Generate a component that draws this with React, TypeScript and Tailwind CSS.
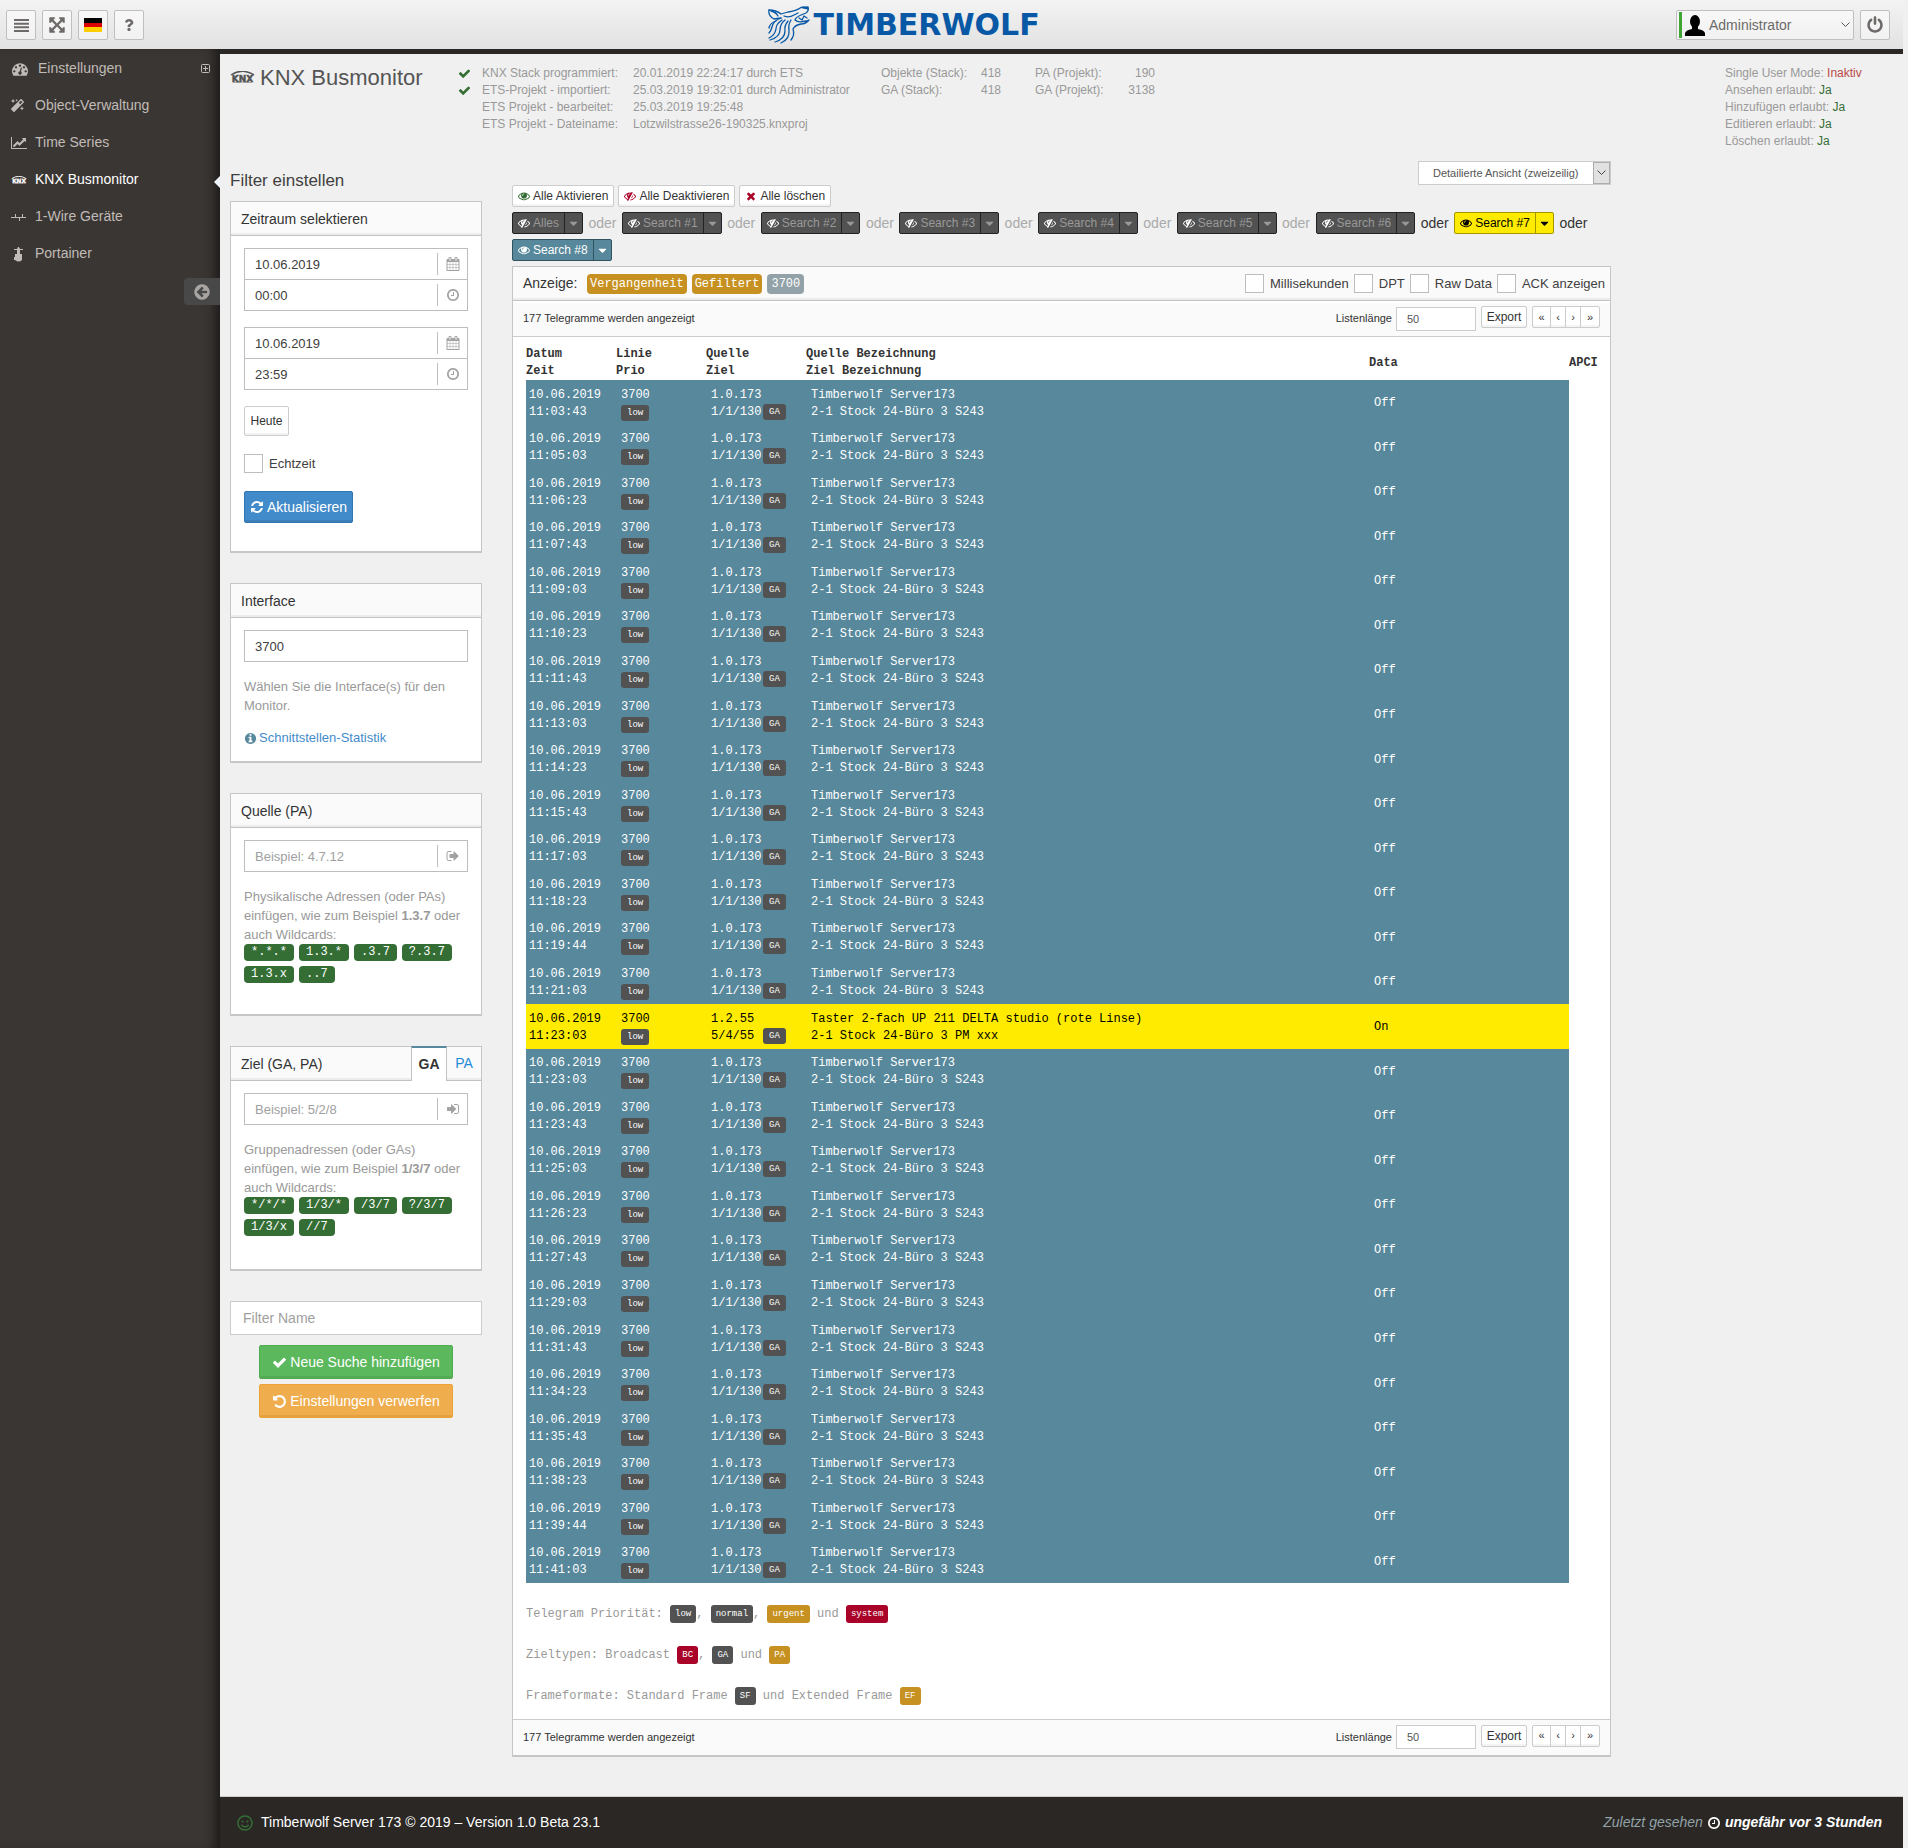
import type { ReactNode } from "react";
import { FaMagic, FaQuestion, FaRegSmile } from "react-icons/fa";

const CIRCLE =
  "M1664 896q0 209-103 385.5t-279.5 279.5-385.5 103-385.5-103-279.5-279.5-103-385.5 103-385.5 279.5-279.5 385.5-103 385.5 103 279.5 279.5 103 385.5z";

const ICONS = {
  eye: "M1664 960q-152-236-381-353 61 104 61 225 0 185-131.5 316.5t-316.5 131.5-316.5-131.5-131.5-316.5q0-121 61-225-229 117-381 353 133 205 333.5 326.5t434.5 121.5 434.5-121.5 333.5-326.5zm-720-384q0-20-14-34t-34-14q-125 0-214.5 89.5t-89.5 214.5q0 20 14 34t34 14 34-14 14-34q0-86 61-147t147-61q20 0 34-14t14-34zm848 384q0 34-20 69-140 230-376.5 368.5t-499.5 138.5-499.5-139-376.5-368q-20-35-20-69t20-69q140-229 376.5-368t499.5-139 499.5 139 376.5 368q20 35 20 69z",
  eyeSlash:
    "M555 1335l78-141q-87-63-136-159t-49-203q0-121 61-225-229 117-381 353 167 258 427 375zm389-759q0-20-14-34t-34-14q-125 0-214.5 89.5t-89.5 214.5q0 20 14 34t34 14 34-14 14-34q0-86 61-147t147-61q20 0 34-14t14-34zm363-191q0 7-1 9-106 189-316 567t-315 566l-49 89q-10 16-28 16-12 0-134-70-16-10-16-28 0-12 44-87-143-65-263.5-173t-208.5-245q-20-31-20-69t20-69q153-235 380-371t496-136q89 0 180 17l54-97q10-16 28-16 5 0 18 6t31 15.5 33 18.5 31.5 18.5 19.5 11.5q16 10 16 27zm37 447q0 139-79 253.5t-209 164.5l280-502q8 45 8 84zm448 128q0 35-20 69-39 64-109 145-150 172-347.5 267t-419.5 95l74-132q212-18 392.5-137t301.5-307q-115-179-282-294l63-112q95 64 182.5 153t144.5 184q20 34 20 69z",
  calendar:
    "M192 1664h288v-288h-288v288zm352 0h320v-288h-320v288zm-352-352h288v-320h-288v320zm352 0h320v-320h-320v320zm-352-384h288v-288h-288v288zm736 736h320v-288h-320v288zm-384-736h320v-288h-320v288zm768 736h288v-288h-288v288zm-384-352h320v-320h-320v320zm-352-864v-288q0-13-9.5-22.5t-22.5-9.5h-64q-13 0-22.5 9.5t-9.5 22.5v288q0 13 9.5 22.5t22.5 9.5h64q13 0 22.5-9.5t9.5-22.5zm736 864h288v-320h-288v320zm-384-384h320v-288h-320v288zm384 0h288v-288h-288v288zm32-480v-288q0-13-9.5-22.5t-22.5-9.5h-64q-13 0-22.5 9.5t-9.5 22.5v288q0 13 9.5 22.5t22.5 9.5h64q13 0 22.5-9.5t9.5-22.5zm384-64v1280q0 52-38 90t-90 38h-1408q-52 0-90-38t-38-90v-1280q0-52 38-90t90-38h128v-96q0-66 47-113t113-47h64q66 0 113 47t47 113v96h384v-96q0-66 47-113t113-47h64q66 0 113 47t47 113v96h128q52 0 90 38t38 90z",
  clock:
    "M1024 544v448q0 14-9 23t-23 9h-320q-14 0-23-9t-9-23v-64q0-14 9-23t23-9h224v-352q0-14 9-23t23-9h64q14 0 23 9t9 23zm416 352q0-148-73-273t-198-198-273-73-273 73-198 198-73 273 73 273 198 198 273 73 273-73 198-198 73-273z" + CIRCLE,
  check:
    "M1671 566q0 40-28 68l-724 724-136 136q-28 28-68 28t-68-28l-136-136-362-362q-28-28-28-68t28-68l136-136q28-28 68-28t68 28l294 295 656-657q28-28 68-28t68 28l136 136q28 28 28 68z",
  times:
    "M1490 1322q0 40-28 68l-136 136q-28 28-68 28t-68-28l-294-294-294 294q-28 28-68 28t-68-28l-136-136q-28-28-28-68t28-68l294-294-294-294q-28-28-28-68t28-68l136-136q28-28 68-28t68 28l294 294 294-294q28-28 68-28t68 28l136 136q28 28 28 68t-28 68l-294 294 294 294q28 28 28 68z",
  refresh:
    "M1639 1056q0 5-1 7-64 268-268 434.5t-478 166.5q-146 0-282.5-55t-243.5-157l-129 129q-19 19-45 19t-45-19-19-45v-448q0-26 19-45t45-19h448q26 0 45 19t19 45-19 45l-137 137q71 66 161 102t187 36q134 0 250-65t186-179q11-17 53-117 8-23 30-23h192q13 0 22.5 9.5t9.5 22.5zm25-800v448q0 26-19 45t-45 19h-448q-26 0-45-19t-19-45 19-45l138-138q-148-137-349-137-134 0-250 65t-186 179q-11 17-53 117-8 23-30 23h-199q-13 0-22.5-9.5t-9.5-22.5v-7q65-268 270-434.5t480-166.5q146 0 284 55.5t245 156.5l130-129q19-19 45-19t45 19 19 45z",
  undo: "M1664 896q0 156-61 298t-164 245-245 164-298 61q-172 0-327-72.5t-264-204.5q-7-10-6.5-22.5t8.5-20.5l137-138q10-9 25-9 16 2 23 12 73 95 179 147t225 52q104 0 198.5-40.5t163.5-109.5 109.5-163.5 40.5-198.5-40.5-198.5-109.5-163.5-163.5-109.5-198.5-40.5q-98 0-188 35.5t-160 101.5l137 138q31 30 14 69-17 40-59 40h-448q-26 0-45-19t-19-45v-448q0-42 40-59 39-17 69 14l130 129q107-101 244.5-156.5t284.5-55.5q156 0 298 61t245 164 164 245 61 298z",
  signOut:
    "M704 1440q0 4 1 20t.5 26.5-3 23.5-10 19.5-20.5 6.5h-320q-119 0-203.5-84.5t-84.5-203.5v-704q0-119 84.5-203.5t203.5-84.5h320q13 0 22.5 9.5t9.5 22.5q0 4 1 20t.5 26.5-3 23.5-10 19.5-20.5 6.5h-320q-66 0-113 47t-47 113v704q0 66 47 113t113 47h312l11.5 1 11.5 3 8 5.5 7 9 2 13.5zm928-544q0 26-19 45l-544 544q-19 19-45 19t-45-19-19-45v-288h-448q-26 0-45-19t-19-45v-384q0-26 19-45t45-19h448v-288q0-26 19-45t45-19 45 19l544 544q19 19 19 45z",
  signIn:
    "M1312 896q0 26-19 45l-544 544q-19 19-45 19t-45-19-19-45v-288h-448q-26 0-45-19t-19-45v-384q0-26 19-45t45-19h448v-288q0-26 19-45t45-19 45 19l544 544q19 19 19 45zm352-352v704q0 119-84.5 203.5t-203.5 84.5h-320q-13 0-22.5-9.5t-9.5-22.5q0-4-1-20t-.5-26.5 3-23.5 10-19.5 20.5-6.5h320q66 0 113-47t47-113v-704q0-66-47-113t-113-47h-312l-11.5-1-11.5-3-8-5.5-7-9-2-13.5q0-4-1-20t-.5-26.5 3-23.5 10-19.5 20.5-6.5h320q119 0 203.5 84.5t84.5 203.5z",
  info: "M1152 1376v-160q0-14-9-23t-23-9h-96v-512q0-14-9-23t-23-9h-320q-14 0-23 9t-9 23v160q0 14 9 23t23 9h96v320h-96q-14 0-23 9t-9 23v160q0 14 9 23t23 9h448q14 0 23-9t9-23zm-128-896v-160q0-14-9-23t-23-9h-192q-14 0-23 9t-9 23v160q0 14 9 23t23 9h192q14 0 23-9t9-23z" + CIRCLE,
  power:
    "M1664 896q0 156-61 298t-164 245-245 164-298 61-298-61-245-164-164-245-61-298q0-182 80.5-343t226.5-270q43-32 95.5-25t83.5 50q32 42 24.5 94.5t-49.5 84.5q-98 74-151.5 181t-53.5 228q0 104 40.5 198.5t109.5 163.5 163.5 109.5 198.5 40.5 198.5-40.5 163.5-109.5 109.5-163.5 40.5-198.5q0-121-53.5-228t-151.5-181q-42-32-49.5-84.5t24.5-94.5q31-43 84-50t95 25q146 109 226.5 270t80.5 343zm-640-768v640q0 52-38 90t-90 38-90-38-38-90v-640q0-52 38-90t90-38 90 38 38 90z",
  arrowLeft:
    "M1408 960v-128q0-26-19-45t-45-19h-502l189-189q19-19 19-45t-19-45l-91-91q-18-18-45-18t-45 18l-362 362-91 91q-18 18-18 45t18 45l91 91 362 362q18 18 45 18t45-18l91-91q18-18 18-45t-18-45l-189-189h502q26 0 45-19t19-45z" + CIRCLE,
  caret:
    "M1408 704q0 26-19 45l-448 448q-19 19-45 19t-45-19l-448-448q-19-19-19-45t19-45 45-19h896q26 0 45 19t19 45z",
  expand:
    "M1411 541l-355 355 355 355 144-144q29-31 70-14 39 17 39 59v448q0 26-19 45t-45 19h-448q-42 0-59-40-17-39 14-69l144-144-355-355-355 355 144 144q31 30 14 69-17 40-59 40h-448q-26 0-45-19t-19-45v-448q0-42 40-59 39-17 69 14l144 144 355-355-355-355-144 144q-19 19-45 19-12 0-24-5-40-17-40-59v-448q0-26 19-45t45-19h448q42 0 59 40 17 39-14 69l-144 144 355 355 355-355-144-144q-31-30-14-69 17-40 59-40h448q26 0 45 19t19 45v448q0 42-39 59-13 5-25 5-26 0-45-19z",
  dashboard:
    "M384 1152q0-53-37.5-90.5t-90.5-37.5-90.5 37.5-37.5 90.5 37.5 90.5 90.5 37.5 90.5-37.5 37.5-90.5zm192-448q0-53-37.5-90.5t-90.5-37.5-90.5 37.5-37.5 90.5 37.5 90.5 90.5 37.5 90.5-37.5 37.5-90.5zm428 481l101-382q6-26-7.5-48.5t-38.5-29.5-48 6.5-30 39.5l-101 382q-60 5-107 43.5t-63 98.5q-20 77 20 146t117 89 146-20 89-117q16-60-6-117t-72-91zm660-33q0-53-37.5-90.5t-90.5-37.5-90.5 37.5-37.5 90.5 37.5 90.5 90.5 37.5 90.5-37.5 37.5-90.5zm-640-640q0-53-37.5-90.5t-90.5-37.5-90.5 37.5-37.5 90.5 37.5 90.5 90.5 37.5 90.5-37.5 37.5-90.5zm448 192q0-53-37.5-90.5t-90.5-37.5-90.5 37.5-37.5 90.5 37.5 90.5 90.5 37.5 90.5-37.5 37.5-90.5zm320 448q0 261-141 483-19 29-54 29h-1402q-35 0-54-29-141-221-141-483 0-182 71-348t191-286 286-191 348-71 348 71 286 191 191 286 71 348z",
};

function Icon({ name, className }: { name: keyof typeof ICONS; className: string }) {
  return (
    <svg viewBox="0 0 1792 1792" fill="currentColor" className={`shrink-0 ${className}`} aria-hidden="true">
      <path d={ICONS[name]} fillRule="evenodd" />
    </svg>
  );
}

function KnxMark({ className }: { className: string }) {
  return (
    <svg viewBox="0 0 50 24" className={className} fill="none" stroke="currentColor" aria-hidden="true">
      <path d="M2 8 Q24 -7 48 8" strokeWidth="3" />
      <path d="M6 23.500 Q25 21 44 23.500" strokeWidth="1" />
      <text x="25" y="21" textAnchor="middle" fontSize="18" fontWeight="bold" fontFamily="DejaVu Sans" fill="currentColor" strokeWidth="1">
        KNX
      </text>
    </svg>
  );
}

function Wolf() {
  return (
    <svg viewBox="0 0 42 38" className="h-[38px] w-[42px]" fill="none" stroke="#0858a5" strokeWidth="1.300" strokeLinecap="round" strokeLinejoin="round" aria-hidden="true">
      <path d="M1 4 Q8 4 13 8 L20 6 Q28 5 33 1.500 L40 1 Q41 5 38 7 L33 9 Q28 11 27 14 Q30 17 38 15 L41 14 Q38 18 33 18 Q27 19 25 23 Q27 29 23 34" />
      <path d="M1 4 Q0 10 6 13 L13 12 M3 5 Q8 6 10 10" />
      <path d="M16 10 Q21 12 26 9 L30 7" />
      <path d="M31 12 L34 14 L36 10 L39 12" />
      <path d="M35 1.500 L40 2.500" strokeWidth="2" />
      <path d="M13 12 Q5 15 4 21 Q3 25 1 27 M14 14 Q8 18 8 23 Q7 29 1 32" />
      <path d="M17 14 Q12 18 12 24 Q12 31 2 34 M20 15 Q16 20 17 25 Q17 33 7 36" />
      <path d="M23 14 Q20 19 21 24 Q22 33 13 37 M8 15 Q2 17 1 22" />
    </svg>
  );
}

function ChartIcon() {
  return (
    <svg viewBox="0 0 2048 1792" fill="currentColor" className="h-[14px] w-4" aria-hidden="true">
      <path d="M2048 1536v128h-2048v-1536h128v1408h1920zm-128-1248v435q0 21-19.500 29.500t-35.500-7.500l-121-121-633 633q-10 10-23 10t-23-10l-233-233-416 416-192-192 585-585q10-10 23-10t23 10l233 233 464-464-121-121q-16-16-7.500-35.500t29.500-19.500h435q14 0 23 9t9 23z" />
    </svg>
  );
}

function WireIcon() {
  return (
    <svg viewBox="0 0 16 10" className="h-[10px] w-4" fill="none" stroke="currentColor" aria-hidden="true">
      <path d="M0 5.500h15M4.500 2v3.500M8.500 5.500v3.500M11.500 2v3.500" />
    </svg>
  );
}

function PortainerIcon() {
  return (
    <svg viewBox="0 0 16 16" className="h-4 w-4" fill="currentColor" aria-hidden="true">
      <path d="M7 1h1l1 2h3v1H9v4h2v1H4V8h2V4H3V3h3z" />
      <path d="M4 9h7v5q-3 3-7 0zM3 11h1v3H3z" />
    </svg>
  );
}

const TOP_BUTTON =
  "flex h-[30px] w-[30px] items-center justify-center rounded-[2px] border border-[#bfbfbf] bg-linear-to-b from-[#f8f8f8] to-[#f1f1f1] text-[#6d6a69]";

function TopBar() {
  return (
    <header className="relative flex h-[49px] items-center justify-between bg-linear-to-b from-[#f3f3f3] to-[#e2e2e2] pr-[13px] pl-1.5">
      <div className="flex gap-1.5 pt-px">
        <button className={TOP_BUTTON} aria-label="Menü">
          <svg viewBox="0 0 15 13" className="h-[13px] w-[15px]" fill="currentColor" aria-hidden="true">
            <path d="M0 0h15v2H0zM0 3.700h15v2H0zM0 7.300h15v2H0zM0 11h15v2H0z" />
          </svg>
        </button>
        <button className={TOP_BUTTON} aria-label="Vollbild">
          <Icon name="expand" className="h-[18px] w-[18px]" />
        </button>
        <button className={TOP_BUTTON} aria-label="Sprache: Deutsch">
          <span className="flex h-[14px] w-[18px] flex-col">
            <span className="flex-1 bg-black" />
            <span className="flex-1 bg-[#dd0000]" />
            <span className="flex-1 bg-[#ffce00]" />
          </span>
        </button>
        <button className={TOP_BUTTON} aria-label="Hilfe">
          <FaQuestion className="h-3 w-3" />
        </button>
      </div>
      <a href="#" className="absolute top-1.5 left-1/2 flex -translate-x-[184px] items-center gap-1 text-[#0858a5]">
        <Wolf />
        <span className="font-['DejaVu_Sans'] text-[30px] leading-[38px] font-bold">TIMBERWOLF</span>
      </a>
      <div className="flex gap-1.5 pt-px">
        <div className="relative flex h-[30px] w-[178px] items-center rounded-[2px] border border-[#bfbfbf] bg-linear-to-b from-[#f8f8f8] to-[#f1f1f1] pl-0.5">
          <span className="h-[26px] w-[3px] bg-[#3fa535]" />
          <svg viewBox="0 0 20 21" className="ml-[3px] h-[21px] w-5" aria-hidden="true">
            <ellipse cx="10" cy="6.500" rx="5" ry="6.500" />
            <path d="M7 10h6v4q6 1 7 4v3H0v-3q1-3 7-4z" />
          </svg>
          <select aria-label="Benutzer" className="h-full flex-1 appearance-none bg-transparent pl-1 text-[14px] text-[#6d6a69]">
            <option>Administrator</option>
          </select>
          <svg viewBox="0 0 9 6" className="pointer-events-none absolute right-[3px] h-1.5 w-[9px]" fill="none" stroke="#555" aria-hidden="true">
            <path d="M.5 .5l4 4 4-4" />
          </svg>
        </div>
        <button className={TOP_BUTTON} aria-label="Abmelden">
          <Icon name="power" className="h-[18px] w-[18px]" />
        </button>
      </div>
    </header>
  );
}

function NavItem({ icon, active, children }: { icon: ReactNode; active?: boolean; children: ReactNode }) {
  return (
    <a href="#" className={`relative flex h-[37px] items-center pl-[11px] text-[14px] ${active ? "text-white" : "text-[#c0bbb7]"}`}>
      <span className="flex w-6 items-center">{icon}</span>
      {children}
      {active && <span className="absolute top-1/2 right-0 -translate-y-1 border-y-[6px] border-r-[6px] border-y-transparent border-r-[#eef4fb]" />}
    </a>
  );
}

function Sidebar() {
  return (
    <aside className="w-[220px] shrink-0 bg-[#3a3633] pt-px shadow-[inset_-11px_0_12px_-6px_#1c1a19]">
      <nav>
        <a href="#" className="flex h-[37px] items-center pr-2.5 pl-3 text-[14px] text-[#c0bbb7]">
          <Icon name="dashboard" className="mr-2.5 h-4 w-4" />
          Einstellungen
          <svg viewBox="0 0 9 9" className="ml-auto h-[9px] w-[9px]" fill="none" stroke="currentColor" aria-hidden="true">
            <rect x=".5" y=".5" width="8" height="8" rx="1" />
            <path d="M4.500 2v5M2 4.500h5" />
          </svg>
        </a>
        <NavItem icon={<FaMagic className="h-[13px] w-[13px]" />}>Object-Verwaltung</NavItem>
        <NavItem icon={<ChartIcon />}>Time Series</NavItem>
        <NavItem icon={<KnxMark className="h-2 w-4" />} active>
          KNX Busmonitor
        </NavItem>
        <NavItem icon={<WireIcon />}>1-Wire Geräte</NavItem>
        <NavItem icon={<PortainerIcon />}>Portainer</NavItem>
      </nav>
      <button className="mt-1.5 ml-auto flex h-[27px] w-9 items-center justify-center rounded-l-[4px] bg-[#484848] text-[#a8a4a2]" aria-label="Menü einklappen">
        <Icon name="arrowLeft" className="h-[18px] w-[18px]" />
      </button>
    </aside>
  );
}

const STACK_INFO = [
  { ok: true, label: "KNX Stack programmiert:", value: "20.01.2019 22:24:17 durch ETS", a: "Objekte (Stack):", av: "418", b: "PA (Projekt):", bv: "190" },
  { ok: true, label: "ETS-Projekt - importiert:", value: "25.03.2019 19:32:01 durch Administrator", a: "GA (Stack):", av: "418", b: "GA (Projekt):", bv: "3138" },
  { ok: false, label: "ETS Projekt - bearbeitet:", value: "25.03.2019 19:25:48", a: "", av: "", b: "", bv: "" },
  { ok: false, label: "ETS Projekt - Dateiname:", value: "Lotzwilstrasse26-190325.knxproj", a: "", av: "", b: "", bv: "" },
];

const RIGHTS = ["Ansehen", "Hinzufügen", "Editieren", "Löschen"];

function PageHead() {
  return (
    <div className="flex pt-[11px] text-[12px] leading-[17px] text-[#999]">
      <h1 className="flex h-6 w-[228px] items-center gap-[5px] text-[22px] whitespace-nowrap text-[#555]">
        <KnxMark className="h-3 w-[25px] shrink-0" />
        KNX Busmonitor
      </h1>
      <table className="h-[68px] table-fixed">
        <colgroup>
          <col className="w-6" />
          <col className="w-[151px]" />
          <col className="w-[248px]" />
          <col className="w-[90px]" />
          <col className="w-[30px]" />
          <col className="w-[124px]" />
          <col className="w-[30px]" />
        </colgroup>
        <tbody>
          {STACK_INFO.map((r) => (
            <tr key={r.label} className="h-[17px]">
              <td>{r.ok && <Icon name="check" className="h-[13px] w-[13px] text-[#356e35]" />}</td>
              <td>{r.label}</td>
              <td>{r.value}</td>
              <td>{r.a}</td>
              <td className="text-right">{r.av}</td>
              <td className="pl-[34px]">{r.b}</td>
              <td className="text-right">{r.bv}</td>
            </tr>
          ))}
        </tbody>
      </table>
      <div className="ml-auto w-[178px]">
        <p>
          Single User Mode: <span className="text-[#b94a48]">Inaktiv</span>
        </p>
        {RIGHTS.map((r) => (
          <p key={r}>
            {r} erlaubt: <span className="text-[#356e35]">Ja</span>
          </p>
        ))}
      </div>
    </div>
  );
}

function Panel({ title, tabs, bottom, children }: { title: string; tabs?: ReactNode; bottom: string; children: ReactNode }) {
  return (
    <section className={`mb-[30px] border border-b-2 border-[#c6c6c6] bg-white px-[13px] ${bottom}`}>
      <header className="-mx-[13px] mb-3 flex h-[34px] border-b border-[#c2c2c2] bg-[#fafafa] pl-2.5 shadow-[inset_0_-2px_0_#ececec]">
        <h2 className="flex-1 text-[14px] leading-[34px] text-[#333]">{title}</h2>
        {tabs}
      </header>
      {children}
    </section>
  );
}

function Field({ label, value, placeholder, icon, joined }: { label: string; value?: string; placeholder?: string; icon?: keyof typeof ICONS; joined?: boolean }) {
  return (
    <div className={`flex h-8 items-center border border-[#bdbdbd] bg-white ${joined ? "-mt-px" : ""}`}>
      <input aria-label={label} defaultValue={value} placeholder={placeholder} className="h-full w-full min-w-0 flex-1 pl-2.5 text-[13px] text-[#404040] placeholder:text-[#a0a0a0]" />
      {icon && (
        <span className="flex h-[22px] w-[30px] shrink-0 items-center justify-center border-l border-[#bfbfbf] text-[#a2a2a2]">
          <Icon name={icon} className="h-[14px] w-[14px]" />
        </span>
      )}
    </div>
  );
}

function Wildcards({ items }: { items: string[] }) {
  return (
    <div className="flex flex-wrap gap-[5px]">
      {items.map((w) => (
        <code key={w} className="h-[17px] rounded-[4px] bg-[#356e35] px-[7px] font-['Liberation_Mono',monospace] text-[12px] leading-[17px] text-white">
          {w}
        </code>
      ))}
    </div>
  );
}

const BOX = "h-[19px] w-[19px] shrink-0 appearance-none border border-[#bdbdbd] bg-white";
const NOTE = "mt-[15px] text-[13px] leading-[19px] text-[#999]";

function FilterColumn() {
  return (
    <aside className="w-[252px] shrink-0">
      <h2 className="text-[17px] leading-10 text-[#404040]">Filter einstellen</h2>
      <Panel title="Zeitraum selektieren" bottom="pb-7">
        <Field label="Datum von" value="10.06.2019" icon="calendar" />
        <Field label="Zeit von" value="00:00" icon="clock" joined />
        <div className="h-4" />
        <Field label="Datum bis" value="10.06.2019" icon="calendar" />
        <Field label="Zeit bis" value="23:59" icon="clock" joined />
        <button className="mt-4 block h-[30px] w-[45px] rounded-[2px] border border-[#ccc] text-[12px] text-[#333] shadow-[inset_0_-2px_0_#f2f2f2]">Heute</button>
        <label className="mt-[18px] flex items-center gap-1.5 text-[13px] leading-[19px] text-[#404040]">
          <input type="checkbox" className={BOX} />
          Echtzeit
        </label>
        <button className="mt-[18px] flex h-8 items-center gap-[3px] rounded-[2px] border border-[#3276b1] bg-[#428bca] px-[5px] text-[14px] text-white shadow-[inset_0_-2px_0_#3b7eb8]">
          <Icon name="refresh" className="h-[14px] w-[14px]" />
          Aktualisieren
        </button>
      </Panel>
      <Panel title="Interface" bottom="pb-3.5">
        <Field label="Interface" value="3700" />
        <p className={NOTE}>Wählen Sie die Interface(s) für den Monitor.</p>
        <a href="#" className="mt-3.5 flex items-center gap-0.5 text-[13px] leading-[18px] text-[#428bca]">
          <Icon name="info" className="h-[13px] w-[13px] text-[#57889c]" />
          Schnittstellen-Statistik
        </a>
      </Panel>
      <Panel title="Quelle (PA)" bottom="pb-[31px]">
        <Field label="Quelle" placeholder="Beispiel: 4.7.12" icon="signOut" />
        <p className={NOTE}>
          Physikalische Adressen (oder PAs) einfügen, wie zum Beispiel <b>1.3.7</b> oder auch Wildcards:
        </p>
        <Wildcards items={["*.*.*", "1.3.*", ".3.7", "?.3.7", "1.3.x", "..7"]} />
      </Panel>
      <Panel
        title="Ziel (GA, PA)"
        bottom="pb-[33px]"
        tabs={
          <div className="flex text-[14px]">
            <button className="-mt-px h-[35px] w-9 border-x border-t-2 border-x-[#c2c2c2] border-t-[#57889c] bg-white font-bold text-[#333]">GA</button>
            <button className="h-[33px] w-[34px] text-[#1d8cd6]">PA</button>
          </div>
        }
      >
        <Field label="Ziel" placeholder="Beispiel: 5/2/8" icon="signIn" />
        <p className={NOTE}>
          Gruppenadressen (oder GAs) einfügen, wie zum Beispiel <b>1/3/7</b> oder auch Wildcards:
        </p>
        <Wildcards items={["*/*/*", "1/3/*", "/3/7", "?/3/7", "1/3/x", "//7"]} />
      </Panel>
      <input aria-label="Filter Name" placeholder="Filter Name" className="block h-[34px] w-full border border-[#ccc] bg-white px-3 text-[14px] placeholder:text-[#a0a0a0]" />
      <div className="flex flex-col items-center gap-[5px] pt-2.5 text-[14px] text-white">
        <button className="flex h-[34px] w-[194px] items-center justify-center gap-[3px] rounded-[2px] border border-[#4cae4c] bg-[#5cb85c] shadow-[inset_0_-2px_0_#54ab54]">
          <Icon name="check" className="h-[15px] w-[15px]" />
          Neue Suche hinzufügen
        </button>
        <button className="flex h-[34px] w-[194px] items-center justify-center gap-[3px] rounded-[2px] border border-[#eea236] bg-[#f0ad4e] shadow-[inset_0_-2px_0_#e5a040]">
          <Icon name="undo" className="h-[15px] w-[15px]" />
          Einstellungen verwerfen
        </button>
      </div>
    </aside>
  );
}

const TONES = {
  off: "border-[#222] bg-[#525252] text-[#999] divide-[#222]",
  yellow: "border-[#a39600] bg-[#ffeb00] text-black divide-[#a39600]",
  teal: "border-[#31535f] bg-[#57889c] text-white divide-[#31535f]",
};

function SearchButton({ label, tone }: { label: string; tone: keyof typeof TONES }) {
  return (
    <span className={`flex h-[22px] divide-x rounded-[2px] border text-[12px] ${TONES[tone]}`}>
      <button className="flex items-center gap-[3px] px-[5px] whitespace-nowrap">
        <Icon name={tone === "off" ? "eyeSlash" : "eye"} className={tone === "off" ? "h-3 w-3 text-white" : "h-3 w-3"} />
        {label}
      </button>
      <button className="flex w-[17px] items-center justify-center" aria-label={`${label} Optionen`}>
        <Icon name="caret" className="h-[13px] w-[13px]" />
      </button>
    </span>
  );
}

const SEARCHES: { label: string; tone: keyof typeof TONES; next?: "dim" | "dark" }[] = [
  { label: "Alles", tone: "off", next: "dim" },
  { label: "Search #1", tone: "off", next: "dim" },
  { label: "Search #2", tone: "off", next: "dim" },
  { label: "Search #3", tone: "off", next: "dim" },
  { label: "Search #4", tone: "off", next: "dim" },
  { label: "Search #5", tone: "off", next: "dim" },
  { label: "Search #6", tone: "off", next: "dark" },
  { label: "Search #7", tone: "yellow", next: "dark" },
  { label: "Search #8", tone: "teal" },
];

const PLAIN = "flex h-[22px] items-center gap-[3px] rounded-[2px] border border-[#ccc] bg-white px-[5px] text-[12px] text-[#333] shadow-[inset_0_-2px_0_#f4f4f4]";

function SearchBar() {
  return (
    <>
      <div className="flex justify-end">
        <div className="relative">
          <select aria-label="Ansicht" className="block h-6 w-[193px] appearance-none border border-[#ccc] bg-white pl-3.5 text-[11px] text-[#555]">
            <option>Detailierte Ansicht (zweizeilig)</option>
          </select>
          <span className="pointer-events-none absolute top-px right-px flex h-[22px] w-[17px] items-center justify-center border border-[#adadad] bg-[#e1e1e1]">
            <svg viewBox="0 0 9 6" className="h-1.5 w-[9px]" fill="none" stroke="#444" aria-hidden="true">
              <path d="M.5 .5l4 4 4-4" />
            </svg>
          </span>
        </div>
      </div>
      <div className="flex gap-1">
        <button className={PLAIN}>
          <Icon name="eye" className="h-3 w-3 text-[#356e35]" />
          Alle Aktivieren
        </button>
        <button className={PLAIN}>
          <Icon name="eyeSlash" className="h-3 w-3 text-[#a90329]" />
          Alle Deaktivieren
        </button>
        <button className={PLAIN}>
          <Icon name="times" className="h-3 w-3 text-[#a90329]" />
          Alle löschen
        </button>
      </div>
      <div className="flex flex-wrap gap-y-[5px] py-[5px]">
        {SEARCHES.map((s) => (
          <div key={s.label} className="flex items-center">
            <SearchButton label={s.label} tone={s.tone} />
            {s.next && <span className={`w-[39px] text-center text-[14px] leading-[22px] ${s.next === "dim" ? "text-[#aaa]" : "text-[#333]"}`}>oder</span>}
          </div>
        ))}
      </div>
    </>
  );
}

function ListBar({ id }: { id: string }) {
  return (
    <div className="flex h-[35px] items-center pr-2.5 pl-2.5 text-[11px] text-[#333]">
      <span className="flex-1">177 Telegramme werden angezeigt</span>
      <label htmlFor={id} className="pr-1">
        Listenlänge
      </label>
      <input id={id} defaultValue="50" className="h-6 w-20 border border-[#ccc] bg-white pl-2.5 text-[11px] text-[#555]" />
      <button className="mt-[5px] ml-[5px] h-[22px] w-[46px] self-start rounded-[2px] border border-[#ccc] bg-white text-[12px] shadow-[inset_0_-2px_0_#f4f4f4]">Export</button>
      <div className="mt-[5px] ml-[5px] flex h-[22px] divide-x divide-[#ccc] self-start rounded-[2px] border border-[#ccc] bg-white shadow-[inset_0_-2px_0_#f4f4f4]">
        <button className="w-[18px]" aria-label="Erste Seite">«</button>
        <button className="w-[15px]" aria-label="Vorherige Seite">‹</button>
        <button className="w-[15px]" aria-label="Nächste Seite">›</button>
        <button className="w-[18px]" aria-label="Letzte Seite">»</button>
      </div>
    </div>
  );
}

const TIMES = [
  "11:03:43", "11:05:03", "11:06:23", "11:07:43", "11:09:03", "11:10:23", "11:11:43", "11:13:03", "11:14:23",
  "11:15:43", "11:17:03", "11:18:23", "11:19:44", "11:21:03", "11:23:03", "11:23:03", "11:23:43", "11:25:03",
  "11:26:23", "11:27:43", "11:29:03", "11:31:43", "11:34:23", "11:35:43", "11:38:23", "11:39:44", "11:41:03",
];
const ON_ROW = 14;

function Tag({ color, tall, children }: { color: "dark" | "amber" | "red"; tall?: boolean; children: string }) {
  const bg = { dark: "bg-[#525252]", amber: "bg-[#c79121]", red: "bg-[#a90329]" }[color];
  return (
    <span className={`inline-block rounded-[3px] text-[9px] text-white ${bg} ${tall ? "h-[18px] px-[5px] align-middle leading-[18px]" : "h-4 px-1.5 leading-4"}`}>{children}</span>
  );
}

function TelegramTable() {
  return (
    <table className="w-full table-fixed text-left">
      <colgroup>
        <col className="w-[90px]" />
        <col className="w-[90px]" />
        <col className="w-[100px]" />
        <col />
        <col className="w-[200px]" />
        <col className="w-[29px]" />
      </colgroup>
      <thead className="text-[#333]">
        <tr>
          <th>Datum<br />Zeit</th>
          <th>Linie<br />Prio</th>
          <th>Quelle<br />Ziel</th>
          <th>Quelle Bezeichnung<br />Ziel Bezeichnung</th>
          <th>Data</th>
          <th>APCI</th>
        </tr>
      </thead>
      <tbody>
        {TIMES.map((time, i) => {
          const on = i === ON_ROW;
          const height = (i % 7) % 2 === 0 ? "h-[45px]" : "h-[44px]";
          const cell = on ? "bg-[#ffeb00] pt-0.5 text-black" : "bg-[#57889c] pt-0.5 text-white";
          return (
            <tr key={i} className={height}>
              <td className={`pl-[3px] ${cell}`}>10.06.2019<br />{time}</td>
              <td className={`pl-[5px] ${cell}`}>
                <div>3700</div>
                <div className="flex h-[17px] items-end"><Tag color="dark">low</Tag></div>
              </td>
              <td className={`pl-[5px] ${cell}`}>
                <div>{on ? "1.2.55" : "1.0.173"}</div>
                <div className="flex h-[17px]">
                  <span className="w-[52px]">{on ? "5/4/55" : "1/1/130"}</span>
                  <Tag color="dark">GA</Tag>
                </div>
              </td>
              <td className={`pl-[5px] ${cell}`}>
                {on ? "Taster 2-fach UP 211 DELTA studio (rote Linse)" : "Timberwolf Server173"}
                <br />
                {on ? "2-1 Stock 24-Büro 3 PM xxx" : "2-1 Stock 24-Büro 3 S243"}
              </td>
              <td className={`pl-[5px] ${cell}`}>{on ? "On" : "Off"}</td>
              <td />
            </tr>
          );
        })}
      </tbody>
    </table>
  );
}

function MonitorPanel() {
  return (
    <section className="border border-b-2 border-[#c6c6c6] bg-white">
      <header className="flex h-[34px] items-center border-b border-[#c2c2c2] bg-[#fafafa] pr-[5px] pl-2.5 text-[13px] text-[#404040] shadow-[inset_0_-2px_0_#ececec]">
        <h2 className="w-16 text-[14px] text-[#333]">Anzeige:</h2>
        <div className="flex gap-[5px] font-['Liberation_Mono',monospace] text-[12px] leading-5 text-white">
          <span className="h-5 rounded-[4px] bg-[#c79121] px-[3px]">Vergangenheit</span>
          <span className="h-5 rounded-[4px] bg-[#c79121] px-[3px]">Gefiltert</span>
          <span className="h-5 rounded-[4px] bg-[#92a2a8] px-1">3700</span>
        </div>
        <div className="ml-auto flex gap-[5px]">
          {["Millisekunden", "DPT", "Raw Data", "ACK anzeigen"].map((o) => (
            <label key={o} className="flex items-center gap-1.5 whitespace-nowrap">
              <input type="checkbox" className={BOX} />
              {o}
            </label>
          ))}
        </div>
      </header>
      <div className="border-t-2 border-b border-t-white border-b-[#ccc] bg-[#fafafa] -mb-px">
        <div className="-mt-0.5">
          <ListBar id="list-length-top" />
        </div>
      </div>
      <div className="pt-2.5 pr-3 pl-[13px] font-['Liberation_Mono',monospace] text-[12px] leading-[17px]">
        <TelegramTable />
        <div className="flex flex-col gap-[23px] pt-[22px] pb-[13px] leading-[18px] text-[#999]">
          <p>
            Telegram Priorität: <Tag color="dark" tall>low</Tag>, <Tag color="dark" tall>normal</Tag>, <Tag color="amber" tall>urgent</Tag> und <Tag color="red" tall>system</Tag>
          </p>
          <p>
            Zieltypen: Broadcast <Tag color="red" tall>BC</Tag>, <Tag color="dark" tall>GA</Tag> und <Tag color="amber" tall>PA</Tag>
          </p>
          <p>
            Frameformate: Standard Frame <Tag color="dark" tall>SF</Tag> und Extended Frame <Tag color="amber" tall>EF</Tag>
          </p>
        </div>
      </div>
      <div className="border-t border-[#ccc] bg-[#fafafa]">
        <ListBar id="list-length-bottom" />
      </div>
    </section>
  );
}

export default function App() {
  return (
    <div className="flex min-h-screen flex-col bg-[#f0f0f0] pr-[5px] font-['Liberation_Sans',Arial,sans-serif]">
      <TopBar />
      <div className="flex flex-1">
        <Sidebar />
        <div className="flex min-w-0 flex-1 flex-col border-t-[5px] border-[#2a2725]">
          <main className="flex-1 bg-[#f0f0f0] pb-9 pl-2.5">
            <PageHead />
            <div className="flex gap-[30px] pt-[11px]">
              <FilterColumn />
              <div className="mr-[292px] min-w-0 flex-1">
                <SearchBar />
                <MonitorPanel />
              </div>
            </div>
          </main>
          <footer className="flex h-[52px] items-center justify-between border-t border-[#ccc] bg-[#2a2725] pr-[21px] pl-[17px] text-[14px] text-white">
            <span className="flex items-center gap-2">
              <FaRegSmile className="h-4 w-4 text-[#356e35]" />
              Timberwolf Server 173 © 2019 – Version 1.0 Beta 23.1
            </span>
            <span className="flex items-center gap-1 italic">
              <span className="text-[#92a2a8]">Zuletzt gesehen</span>
              <Icon name="clock" className="h-[14px] w-[14px]" />
              <b>ungefähr vor 3 Stunden</b>
            </span>
          </footer>
        </div>
      </div>
    </div>
  );
}
